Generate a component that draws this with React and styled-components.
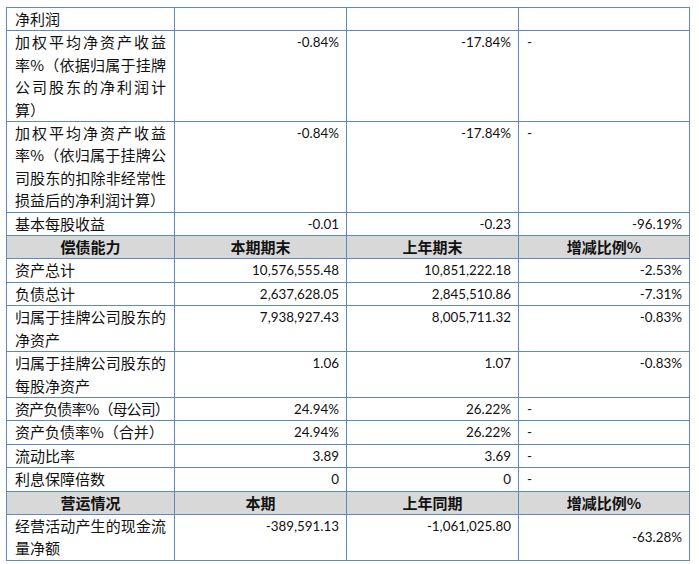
import React from 'react'
import styled, { createGlobalStyle } from 'styled-components'

const GlobalStyle = createGlobalStyle`
  html, body {
    margin: 0;
    padding: 0;
    background: #ffffff;
  }
  body {
    padding: 7px 0 0 6px;
  }
`

const Table = styled.table`
  border-collapse: collapse;
  table-layout: fixed;
  width: 683px;
  color: #111;
  font-family: "Noto Sans CJK SC", sans-serif;
  font-size: 15px;
`

const Cell = styled.td`
  border: 1px solid #5f8bbb;
  padding: 0 8px;
  line-height: 22.4px;
  height: 22.4px;
  vertical-align: ${p => p.$middle ? 'middle' : 'top'};
  text-align: ${p => p.$align || 'left'};
  overflow: hidden;
`

const Label = styled(Cell)`
  text-align: justify;
  text-justify: inter-character;
  letter-spacing: ${p => p.$tight ? '-0.9px' : '0'};
  white-space: ${p => p.$tight ? 'nowrap' : 'normal'};
`

const Num = styled(Cell)`
  font-family: "Lato", "Noto Sans CJK SC", sans-serif;
  font-size: 13.4px;
  text-align: ${p => p.$align || 'right'};
  padding-right: 7px;
`

const Head = styled.td`
  border: 1px solid #5f8bbb;
  background: #d8d8d8;
  font-weight: 700;
  text-align: center;
  line-height: 22.4px;
  height: 22.4px;
  padding: 0 8px;
`

const rows1 = [
  { label: '净利润', a: '', b: '', c: '' },
  { label: '加权平均净资产收益率%（依据归属于挂牌公司股东的净利润计算）', a: '-0.84%', b: '-17.84%', c: '-', left: true },
  { label: '加权平均净资产收益率%（依归属于挂牌公司股东的扣除非经常性损益后的净利润计算）', a: '-0.84%', b: '-17.84%', c: '-', left: true },
  { label: '基本每股收益', a: '-0.01', b: '-0.23', c: '-96.19%' },
]

const rows2 = [
  { label: '资产总计', a: '10,576,555.48', b: '10,851,222.18', c: '-2.53%' },
  { label: '负债总计', a: '2,637,628.05', b: '2,845,510.86', c: '-7.31%' },
  { label: '归属于挂牌公司股东的净资产', a: '7,938,927.43', b: '8,005,711.32', c: '-0.83%' },
  { label: '归属于挂牌公司股东的每股净资产', a: '1.06', b: '1.07', c: '-0.83%' },
  { label: '资产负债率%（母公司）', a: '24.94%', b: '26.22%', c: '-', left: true, tight: true },
  { label: '资产负债率%（合并）', a: '24.94%', b: '26.22%', c: '-', left: true },
  { label: '流动比率', a: '3.89', b: '3.69', c: '-', left: true },
  { label: '利息保障倍数', a: '0', b: '0', c: '-', left: true },
]

function Row({ r, middleLast }) {
  return (
    <tr>
      <Label $tight={r.tight}>{r.label}</Label>
      <Num>{r.a}</Num>
      <Num>{r.b}</Num>
      <Num $align={r.left ? 'left' : 'right'} $middle={middleLast}>{r.c}</Num>
    </tr>
  )
}

export default function App() {
  return (
    <>
      <GlobalStyle />
      <Table>
        <colgroup>
          <col style={{ width: 168 }} />
          <col style={{ width: 172 }} />
          <col style={{ width: 172 }} />
          <col style={{ width: 171 }} />
        </colgroup>
        <tbody>
          {rows1.map((r, i) => <Row key={i} r={r} />)}
          <tr>
            <Head>偿债能力</Head>
            <Head>本期期末</Head>
            <Head>上年期末</Head>
            <Head>增减比例%</Head>
          </tr>
          {rows2.map((r, i) => <Row key={i} r={r} />)}
          <tr>
            <Head>营运情况</Head>
            <Head>本期</Head>
            <Head>上年同期</Head>
            <Head>增减比例%</Head>
          </tr>
          <Row r={{ label: '经营活动产生的现金流量净额', a: '-389,591.13', b: '-1,061,025.80', c: '-63.28%' }} middleLast />
        </tbody>
      </Table>
    </>
  )
}
